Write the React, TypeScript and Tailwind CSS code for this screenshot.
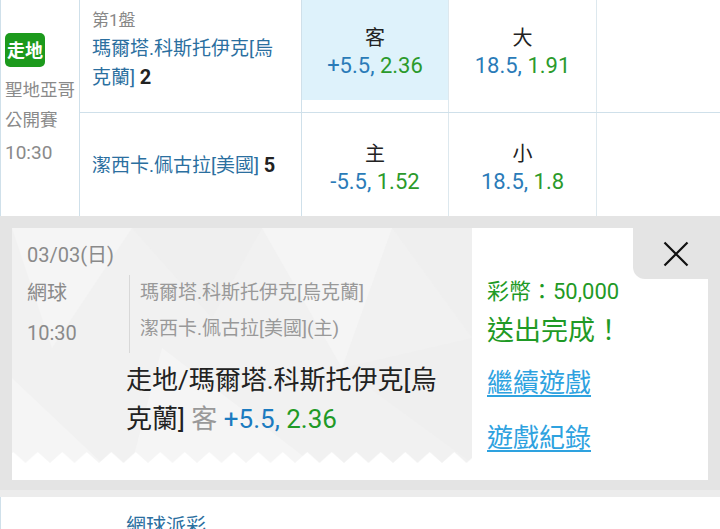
import React from 'react';

const blue = 'text-[#2b6f9f]';
const oddBlue = 'text-[#2a7bb8]';
const oddGreen = 'text-[#2b9a2b]';

interface OddsCell {
  label: string;
  line: string;
  price: string;
  picked?: boolean;
}

const rows: { teams: React.ReactNode; odds: OddsCell[]; first: boolean }[] = [
  {
    first: true,
    teams: (
      <div className="pt-[8px] pl-[12px] pr-[16px]">
        <div className="text-[17px] leading-[24px] text-[#888]">第1盤</div>
        <div className={`mt-[2px] text-[19px] leading-[29px] ${blue}`}>
          瑪爾塔.科斯托伊克[烏克蘭] <span className="text-[20px] font-bold text-[#222]">2</span>
        </div>
      </div>
    ),
    odds: [
      { label: '客', line: '+5.5', price: '2.36', picked: true },
      { label: '大', line: '18.5', price: '1.91' },
    ],
  },
  {
    first: false,
    teams: (
      <div className="flex h-full items-center pl-[12px] pr-[16px] pt-[2px]">
        <div className={`text-[19px] leading-[29px] ${blue}`}>
          潔西卡.佩古拉[美國] <span className="text-[20px] font-bold text-[#222]">5</span>
        </div>
      </div>
    ),
    odds: [
      { label: '主', line: '-5.5', price: '1.52' },
      { label: '小', line: '18.5', price: '1.8' },
    ],
  },
];

const Odds: React.FC<{ cell: OddsCell; first: boolean }> = ({ cell, first }) => (
  <div
    className={`flex flex-col items-center ${
      first ? 'h-[100px] justify-center pt-[3px]' : 'pt-[28px]'
    } ${cell.picked ? 'bg-[#def2fb]' : ''}`}
  >
    <div className="text-[20px] leading-[27px] text-[#222]">{cell.label}</div>
    <div className="text-[22px] leading-[27px]">
      <span className={oddBlue}>{cell.line}, </span>
      <span className={oddGreen}>{cell.price}</span>
    </div>
  </div>
);

const Pattern: React.FC = () => (
  <svg className="absolute inset-0 h-full w-full" viewBox="0 0 460 235" preserveAspectRatio="none">
    <polygon points="0,0 120,0 40,120" fill="#f5f5f5" />
    <polygon points="120,0 250,0 200,90" fill="#ededed" opacity="0.5" />
    <polygon points="250,0 380,0 330,140" fill="#f5f5f5" />
    <polygon points="380,0 460,0 460,110" fill="#ededed" opacity="0.4" />
    <polygon points="0,150 90,235 0,235" fill="#f5f5f5" />
    <polygon points="150,120 300,235 120,235" fill="#f5f5f5" />
    <polygon points="330,140 460,110 460,235" fill="#efefef" />
  </svg>
);

const Zigzag: React.FC = () => (
  <svg className="absolute bottom-0 left-0 h-[11px] w-full" preserveAspectRatio="none">
    <defs>
      <pattern id="teeth" width="24.5" height="11" patternUnits="userSpaceOnUse" x="-11">
        <polygon points="0,11 12.25,0 24.5,11" fill="#ffffff" />
      </pattern>
    </defs>
    <rect width="100%" height="11" fill="url(#teeth)" />
  </svg>
);

export default function App() {
  return (
    <div className="h-[529px] w-[720px] overflow-hidden bg-white font-['Roboto','Noto_Sans_CJK_TC',sans-serif]">
      {/* match table */}
      <div className="flex h-[216px] border-l border-[#cfe0ea]">
        <div className="w-[79px] border-r border-[#cfe0ea] pl-[4px] pt-[33px]">
          <div className="flex h-[34px] w-[40px] items-center justify-center rounded-[5px] bg-[#1c9a1c] text-[18px] font-bold text-white">
            走地
          </div>
          <div className="mt-[8px] text-[17.5px] leading-[30px] text-[#8a8a8a]">
            聖地亞哥
            <br />
            公開賽
          </div>
          <div className="mt-[3px] text-[19px] leading-[30px] text-[#8a8a8a]">10:30</div>
        </div>
        <div className="flex flex-1 flex-col">
          {rows.map((row, i) => (
            <div
              key={i}
              className={`flex ${row.first ? 'h-[113px] border-b border-[#cfe0ea]' : 'flex-1'}`}
            >
              <div className="w-[222px] border-r border-[#cfe0ea]">{row.teams}</div>
              <div className="w-[147px] border-r border-[#dde8ee]">
                <Odds cell={row.odds[0]} first={row.first} />
              </div>
              <div className="w-[148px] border-r border-[#dde8ee]">
                <Odds cell={row.odds[1]} first={row.first} />
              </div>
              <div className="flex-1" />
            </div>
          ))}
        </div>
      </div>

      {/* bet receipt */}
      <div className="border-b-[7px] border-[#ececec] bg-[#e4e4e4] pb-[10px] pl-[12px] pr-[12px] pt-[12px]">
        <div className="relative flex h-[252px]">
          <div className="flex w-[460px] flex-col bg-white">
            <div className="relative h-[235px] bg-[#f1f1f1]">
              <Pattern />
              <Zigzag />
              <div className="relative pl-[15px] pt-[13px]">
                <div className="text-[20px] leading-[28px] text-[#8a8a8a]">03/03(日)</div>
                <div className="mt-[6px] flex">
                  <div className="-mt-[2px] w-[102px] text-[20px] leading-[40px] text-[#8a8a8a]">
                    網球
                    <br />
                    10:30
                  </div>
                  <div className="border-l border-[#d8d8d8] pl-[10px] text-[19px] leading-[36px] text-[#999]">
                    瑪爾塔.科斯托伊克[烏克蘭]
                    <br />
                    潔西卡.佩古拉[美國](主)
                  </div>
                </div>
                <div className="ml-[99px] mt-[8px] w-[332px] text-[26px] leading-[39px] text-[#222]">
                  走地/瑪爾塔.科斯托伊克[烏克蘭] <span className="text-[#999]">客</span>{' '}
                  <span className="text-[#1b7bc0]">+5.5,</span>{' '}
                  <span className="text-[#1f9a26]">2.36</span>
                </div>
              </div>
            </div>
          </div>
          <div className="flex-1 bg-white pl-[15px] pt-[49px]">
            <div className="text-[22px] leading-[30px] text-[#1f9a26]">彩幣：50,000</div>
            <div className="mt-[5px] text-[27px] leading-[38px] text-[#1f9a26]">送出完成！</div>
            <div className="mt-[15px] text-[26px] leading-[36px]">
              <a className="text-[#2ea2df] underline decoration-[2px] underline-offset-[3px]">繼續遊戲</a>
            </div>
            <div className="mt-[19px] text-[26px] leading-[36px]">
              <a className="text-[#2ea2df] underline decoration-[2px] underline-offset-[3px]">遊戲紀錄</a>
            </div>
          </div>
          <button className="absolute -right-[12px] top-0 flex h-[51px] w-[87px] items-center justify-center rounded-bl-[12px] bg-[#e4e4e4]">
            <svg width="26" height="26" viewBox="0 0 26 26" className="-ml-[1px]">
              <path d="M1.5 1.5 L24.5 24.5 M24.5 1.5 L1.5 24.5" stroke="#111" strokeWidth="2.2" />
            </svg>
          </button>
        </div>
      </div>

      {/* next section */}
      <div className="h-[40px] border-l border-[#cfe0ea] pl-[125px] pt-[14px]">
        <div className={`text-[20px] leading-[30px] ${blue}`}>網球派彩</div>
      </div>
    </div>
  );
}
